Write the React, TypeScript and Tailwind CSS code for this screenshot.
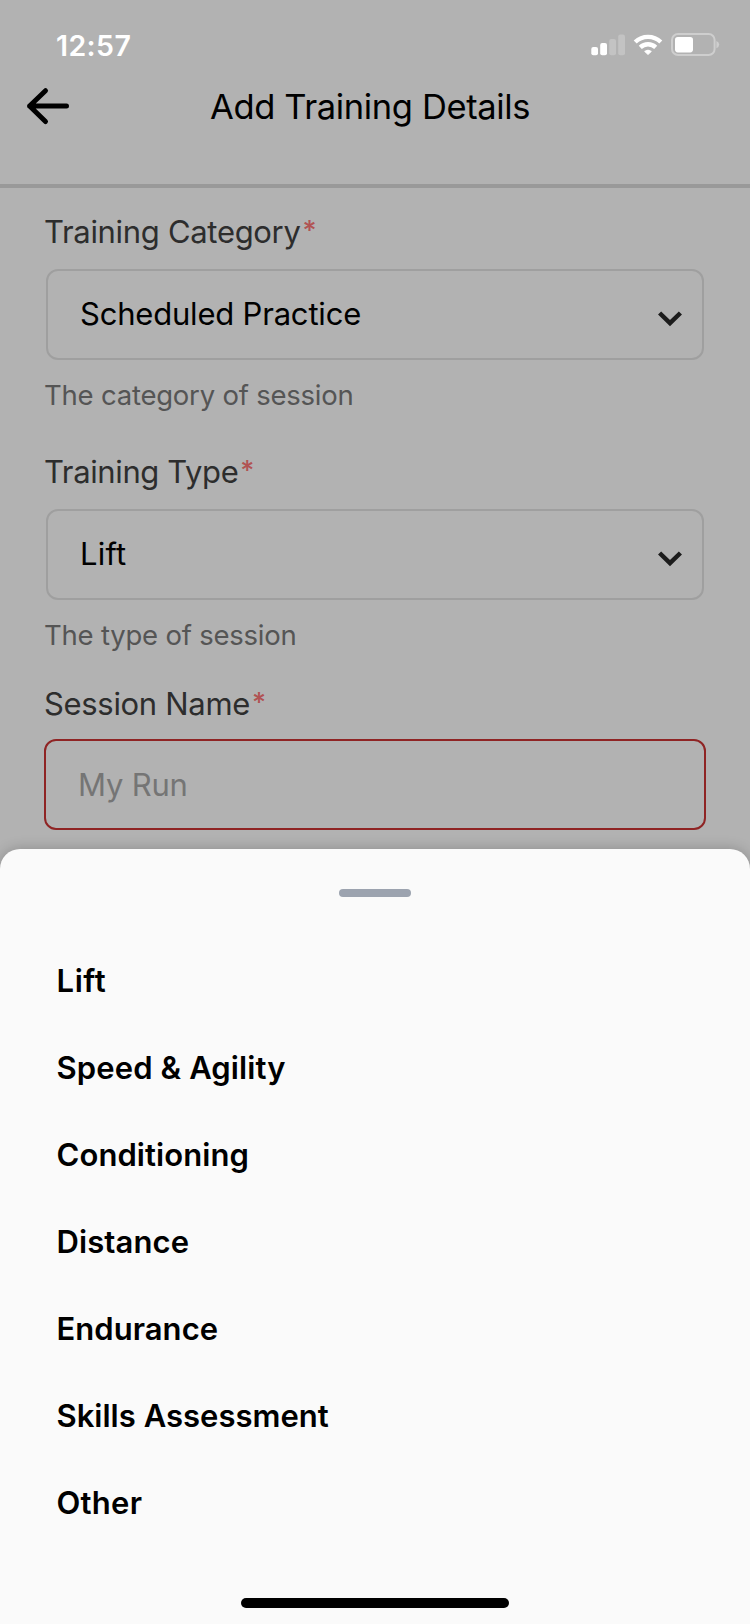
import type { ReactNode } from "react";

const options = [
  { label: "Lift", tracking: "tracking-[0.6px]" },
  { label: "Speed & Agility", tracking: "tracking-[0.12px]" },
  { label: "Conditioning", tracking: "tracking-[0.08px]" },
  { label: "Distance", tracking: "tracking-[0.1px]" },
  { label: "Endurance", tracking: "tracking-[0.04px]" },
  { label: "Skills Assessment", tracking: "tracking-[0.02px]" },
  { label: "Other", tracking: "tracking-[0.25px]" },
];

function StatusBar() {
  return (
    <div className="flex h-[66px] items-end justify-between pr-[30px] pl-[56px]">
      <span className="text-[28.5px] leading-[41px] font-semibold tracking-[0.4px] text-white">12:57</span>
      <svg className="mb-[9px] h-[25px] w-[130px]" viewBox="590 32 130 25" fill="none">
        <g fill="#fff">
          <rect x="591.3" y="47" width="6.7" height="8.2" rx="2" />
          <rect x="600.2" y="43" width="6.8" height="12.2" rx="2" />
          <rect x="609.2" y="39" width="6.8" height="16.2" rx="2" opacity="0.22" />
          <rect x="618.2" y="34.4" width="6.8" height="20.8" rx="2" opacity="0.22" />
          <path d="M648 54.6 L644.6 51.4 Q648 48.8 651.4 51.4 Z" stroke="#fff" strokeWidth="0.8" strokeLinejoin="round" />
        </g>
        <g stroke="#fff" strokeWidth="4.3">
          <path d="M640.3 47.4 A11 11 0 0 1 655.7 47.4" />
          <path d="M635.2 42 A18.6 18.6 0 0 1 660.8 42" />
        </g>
        <rect x="672" y="34" width="42.6" height="21" rx="6" stroke="#cecece" strokeWidth="2" />
        <rect x="675" y="37" width="18" height="15.4" rx="2.8" fill="#fff" />
        <path d="M716.4 41 Q719.2 42 719.2 44.6 Q719.2 47.2 716.4 48.2 Z" fill="#cecece" />
      </svg>
    </div>
  );
}

function Label({ children, className }: { children: ReactNode; className: string }) {
  return (
    <div className="-ml-px flex text-[31px] leading-[40px] whitespace-nowrap text-[#2d2d2d]">
      <span className={className}>{children}</span>
      <span className="ml-[2px] text-[27px] leading-[37px] font-medium text-[#b15353]">*</span>
    </div>
  );
}

function SelectBox({ value, className }: { value: string; className: string }) {
  return (
    <div className="mt-[17px] mr-px ml-[1px] flex h-[91px] items-center justify-between rounded-[12px] border-2 border-[#9f9f9f] pr-[19px] pl-[32px]">
      <span className={`pb-[2px] text-[31px] leading-[40px] text-black ${className}`}>{value}</span>
      <svg className="mt-[9px] h-[18px] w-[26px]" viewBox="0 0 26 18" fill="none">
        <path d="M2.6 3 L13 13.2 L23.4 3" stroke="#1c1c1c" strokeWidth="4.5" />
      </svg>
    </div>
  );
}

export default function App() {
  return (
    <div className="flex h-[1624px] w-[750px] flex-col overflow-hidden bg-[#b2b2b2] font-['Inter',sans-serif]">
      <header className="h-[188px] shrink-0 border-b-4 border-[#999999]">
        <StatusBar />
        <div className="mt-[20px] flex h-10 items-center">
          <svg className="ml-[25px] h-10 w-[46px]" viewBox="0 0 46 40" fill="none">
            <path d="M41.5 20 H4.6 M20.5 4.7 L4.6 20 L20.5 35.5" stroke="#000" strokeWidth="5" strokeLinecap="round" strokeLinejoin="round" />
          </svg>
          <h1 className="ml-[139px] pt-[2px] text-[34.5px] leading-[40px] font-normal tracking-[-0.37px] text-black">Add Training Details</h1>
        </div>
      </header>

      <main className="flex h-[661px] shrink-0 flex-col px-[45px] pt-[24px]">
        <Label className="tracking-[-0.31px]">Training Category</Label>
        <SelectBox value="Scheduled Practice" className="tracking-[-0.2px]" />
        <p className="-ml-px mt-[17px] text-[27.5px] leading-[36px] tracking-[-0.22px] text-[#555555]">The category of session</p>

        <div className="h-[39px]" />
        <Label className="tracking-[-0.38px]">Training Type</Label>
        <SelectBox value="Lift" className="tracking-[0.2px]" />
        <p className="-ml-px mt-[17px] text-[27.5px] leading-[36px] tracking-[-0.22px] text-[#555555]">The type of session</p>

        <div className="h-[31px]" />
        <Label className="tracking-[-0.32px]">Session Name</Label>
        <div className="-mx-px mt-[15px] flex h-[91px] items-center rounded-[12px] border-2 border-[#8f2424] pl-[32px]">
          <span className="text-[31px] leading-[40px] tracking-[-0.2px] text-[#757575]">My Run</span>
        </div>
      </main>

      <section className="flex flex-1 flex-col items-center rounded-t-[20px] bg-[#fafafa] pt-[40px] shadow-[0_0_14px_rgba(0,0,0,0.22)]">
        <div className="h-2 w-[72px] rounded-full bg-[#9ca3af]" />
        <ul className="mt-[40px] w-full pl-[56.5px]">
          {options.map((o) => (
            <li key={o.label} className={`flex h-[87px] items-center text-[31px] leading-[40px] font-semibold text-black ${o.tracking}`}>
              {o.label}
            </li>
          ))}
        </ul>
        <div className="mt-auto mb-4 h-[10px] w-[268px] rounded-full bg-black" />
      </section>
    </div>
  );
}
